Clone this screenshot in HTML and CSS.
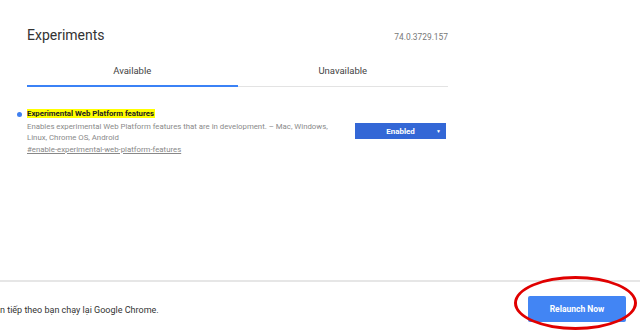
FILE: index.html
```html
<!DOCTYPE html>
<html lang="vi">
<head>
    <meta charset="UTF-8">
    <meta name="viewport" content="width=device-width, initial-scale=1.0">
    <title>Experiments</title>
    <link rel="stylesheet" href="styles.css">
</head>
<body>
    <!-- Flags page -->
    <div class="main">
        <div class="page">
            <div class="header">
                <h1>Experiments</h1>
                <span class="version">74.0.3729.157</span>
            </div>

            <div class="tabs">
                <div class="tab active">Available</div>
                <div class="tab">Unavailable</div>
            </div>

            <div class="experiment">
                <span class="dot"></span>
                <div class="exp-text">
                    <div class="exp-title"><mark>Experimental Web Platform features</mark></div>
                    <p class="exp-desc">Enables experimental Web Platform features that are in development. – Mac, Windows, Linux, Chrome OS, Android</p>
                    <a class="exp-link" href="#enable-experimental-web-platform-features">#enable-experimental-web-platform-features</a>
                </div>
                <div class="exp-select">
                    <span>Enabled</span>
                    <span class="arrow">▼</span>
                </div>
            </div>
        </div>
    </div>

    <!-- Relaunch bar -->
    <div class="footer">
        <p class="footer-text">n tiếp theo bạn chạy lại Google Chrome.</p>
        <div class="relaunch-wrap">
            <button class="relaunch">Relaunch Now</button>
            <span class="circle"></span>
        </div>
    </div>
</body>
</html>
```

FILE: styles.css
```css
/* General */
body, html {
    margin: 0;
    padding: 0;
    font-family: Roboto, "Liberation Sans", Arial, sans-serif;
    background: #fff;
    color: #333;
}
body {
    width: 640px;
    height: 336px;
    display: flex;
    flex-direction: column;
    overflow: hidden;
}
.main {
    flex: 1;
}
.page {
    width: 421px;
    padding-left: 27px;
}

/* Header */
.header {
    display: flex;
    justify-content: space-between;
    align-items: baseline;
    padding-top: 27px;
}
.header h1 {
    margin: 0;
    font-size: 14px;
    font-weight: 400;
    line-height: 16px;
    color: #333;
}
.version {
    font-size: 8.4px;
    color: #777;
}

/* Tabs */
.tabs {
    display: flex;
}
.tab {
    flex: 1;
    text-align: center;
    font-size: 9.5px;
    line-height: 12px;
    padding: 22px 0 9px;
    color: #444;
    border-bottom: 1px solid #e3e3e3;
}
.tab.active {
    padding-bottom: 8px;
    border-bottom: 2px solid #3b82f6;
}

/* Experiment row */
.experiment {
    display: flex;
    align-items: flex-start;
    margin-top: 21px;
    position: relative;
}
.dot {
    position: absolute;
    left: -10px;
    top: 4px;
    width: 5px;
    height: 5px;
    border-radius: 50%;
    background: #3f7ff0;
}
.exp-text {
    width: 312px;
}
.exp-title {
    font-size: 7.8px;
    font-weight: 700;
    line-height: 11px;
}
.exp-title mark {
    background: #ffff00;
    color: #222;
    padding: 0 1px 0 0;
}
.exp-desc {
    margin: 2px 0 0;
    font-size: 7.8px;
    line-height: 11px;
    color: #8a8a8a;
}
.exp-link {
    display: block;
    margin-top: 1px;
    font-size: 7.8px;
    line-height: 11px;
    color: #888;
}
.exp-select {
    margin: 15px 2px 0 auto;
    width: 91px;
    height: 16px;
    background: #3367d6;
    color: #fff;
    font-size: 8px;
    font-weight: 700;
    display: flex;
    align-items: center;
    justify-content: center;
    position: relative;
    box-sizing: border-box;
}
.exp-select .arrow {
    position: absolute;
    right: 5px;
    font-size: 5px;
}

/* Footer */
.footer {
    height: 54px;
    border-top: 2px solid #e6e6e6;
    display: flex;
    align-items: center;
    justify-content: space-between;
    padding-right: 14px;
}
.footer-text {
    margin: 2px 0 0;
    font-size: 9px;
    color: #333;
}
.relaunch-wrap {
    position: relative;
}
.relaunch {
    width: 98px;
    height: 26px;
    background: #4285f4;
    color: #fff;
    border: none;
    border-radius: 2px;
    font-family: Roboto, "Liberation Sans", Arial, sans-serif;
    font-size: 8.5px;
    font-weight: 700;
    display: block;
}
.circle {
    position: absolute;
    left: -14px;
    top: -20px;
    width: 123px;
    height: 54px;
    border: 3px solid #e00000;
    border-radius: 50%;
    box-sizing: border-box;
}
```
